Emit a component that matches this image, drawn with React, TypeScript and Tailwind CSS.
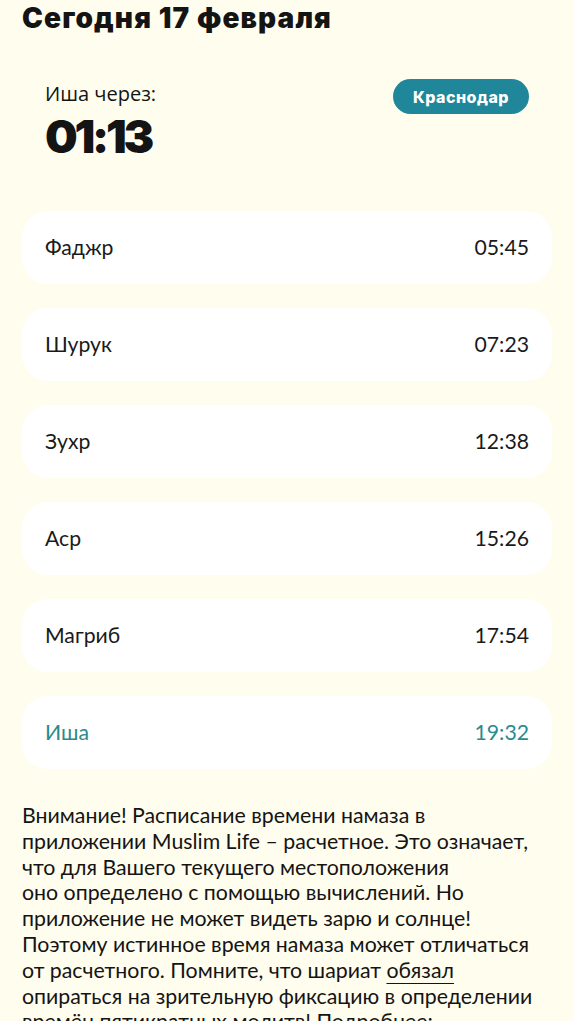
const prayers = [
  { name: "Фаджр", time: "05:45" },
  { name: "Шурук", time: "07:23" },
  { name: "Зухр", time: "12:38" },
  { name: "Аср", time: "15:26" },
  { name: "Магриб", time: "17:54" },
  { name: "Иша", time: "19:32", active: true },
];

function PrayerRow({
  name,
  time,
  active,
}: {
  name: string;
  time: string;
  active?: boolean;
}) {
  return (
    <div
      className={`flex h-[73px] items-center justify-between rounded-[26px] bg-white px-[23px] text-[21.2px] ${
        active ? "text-[#2b8a8e]" : "text-[#1a1a1a]"
      }`}
    >
      <span>{name}</span>
      <span>{time}</span>
    </div>
  );
}

export default function App() {
  return (
    <div
      className="min-h-[1021px] bg-[#fffdee] px-[22px] text-[#141414]"
      style={{ fontFamily: "Lato, 'Noto Sans', sans-serif" }}
    >
      {/* header */}
      <h1 className="pt-[1px] font-['Inter',sans-serif] text-[28px] font-black leading-[34px] tracking-[0.04em]">
        Сегодня 17 февраля
      </h1>

      {/* countdown */}
      <div className="mt-[45px] flex items-start justify-between px-[23px]">
        <div>
          <div className="font-['Open_Sans',sans-serif] text-[20px] leading-[28px]">
            Иша через:
          </div>
          <div className="mt-[6px] font-['Inter',sans-serif] text-[46px] font-black leading-[44px] tracking-[-0.07em]">
            01:13
          </div>
        </div>
        <div className="mt-[-1px] flex h-[35px] items-center rounded-full bg-[#1f8799] px-[20px] font-['Inter',sans-serif] text-[16px] font-extrabold tracking-[0.03em] text-white">
          Краснодар
        </div>
      </div>

      {/* schedule */}
      <div className="mt-[53px] flex flex-col gap-[24px]">
        {prayers.map((p) => (
          <PrayerRow key={p.name} {...p} />
        ))}
      </div>

      {/* disclaimer */}
      <p className="mt-[34px] text-[21.3px] leading-[25.8px] text-[#141414]">
        Внимание! Расписание времени намаза в
        <br />
        приложении Muslim Life – расчетное. Это означает,
        <br />
        что для Вашего текущего местоположения
        <br />
        оно определено с помощью вычислений. Но
        <br />
        приложение не может видеть зарю и солнце!
        <br />
        Поэтому истинное время намаза может отличаться
        <br />
        от расчетного. Помните, что шариат{" "}
        <span className="underline decoration-1 underline-offset-[5px]">обязал</span>
        <br />
        опираться на зрительную фиксацию в определении
        <br />
        времён пятикратных молитв! Подробнее:
      </p>
    </div>
  );
}
